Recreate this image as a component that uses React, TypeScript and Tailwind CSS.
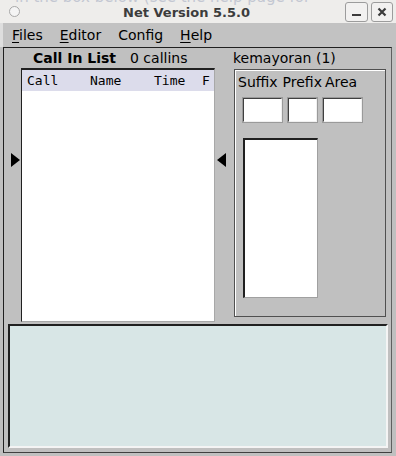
import React from "react";

const font = { fontFamily: '"DejaVu Sans", Verdana, sans-serif' };
const mono = { fontFamily: '"DejaVu Sans Mono", "Liberation Mono", monospace' };

function U({ c, rest }: { c: string; rest: string }) {
  return (
    <span>
      <span className="underline underline-offset-2 decoration-1">{c}</span>
      {rest}
    </span>
  );
}

export default function App() {
  return (
    <div className="w-[396px] h-[456px] bg-[#c0c0c0] overflow-hidden flex flex-col text-black" style={font}>
      {/* Title bar */}
      <div className="relative h-[23px] bg-[#eeedeb] flex items-center shrink-0">
        <span className="absolute left-[15px] top-[-10px] text-[15px] text-[#c3c7d2] whitespace-nowrap leading-none">
          in the box below (see the help page for
        </span>
        <div className="ml-[9px] w-[11px] h-[11px] rounded-full border border-[#a8a8a8] bg-[#f4f4f4] z-10" />
        <div className="flex-1 text-center text-[13px] font-bold text-[#3c3c3c] pl-[8px] pt-[2px] z-10">
          Net Version 5.5.0
        </div>
        <div className="flex gap-[3px] mr-[3px] z-10">
          <div className="w-[23px] h-[20px] rounded-[3px] border border-[#9c9c9c] bg-[#f2f1f0] flex items-end justify-center pb-[5px]">
            <div className="w-[9px] h-[2px] bg-[#3c3c3c]" />
          </div>
          <div className="w-[22px] h-[20px] rounded-[3px] border border-[#9c9c9c] bg-[#f2f1f0] flex items-center justify-center">
            <svg width="10" height="10" viewBox="0 0 10 10">
              <path d="M1.5 1.5 L8.5 8.5 M8.5 1.5 L1.5 8.5" stroke="#3c3c3c" strokeWidth="2.2" />
            </svg>
          </div>
        </div>
      </div>
      {/* Menu bar */}
      <div className="h-[24px] shrink-0 flex items-center text-[14px] bg-[#c2c2c2] border-l-[3px] border-[#dedede] pl-[9px] gap-[17px]">
        <U c="F" rest="iles" />
        <U c="E" rest="ditor" />
        <span>Config</span>
        <U c="H" rest="elp" />
      </div>
      {/* Body */}
      <div className="flex-1 flex flex-col ml-[3px] mr-[4px] mb-[3px] border-t border-l border-[#202020] border-r border-r-[#606060] border-b border-b-[#404040]">
        <div className="flex h-[274px] shrink-0">
          {/* left arrow col */}
          <div className="w-[17px] flex flex-col pt-[105px] pl-[7px]">
            <svg width="9" height="14" viewBox="0 0 9 14">
              <path d="M0 0 L9 7 L0 14 Z" fill="#000" />
            </svg>
          </div>
          {/* left panel */}
          <div className="w-[194px] flex flex-col">
            <div className="h-[20px] flex items-center text-[14px] whitespace-nowrap">
              <span className="font-bold ml-[12px]">Call In List</span>
              <span className="ml-[14px]">0 callins</span>
            </div>
            <div className="h-[254px] bg-white border-t-2 border-l border-[#202020] border-r border-b border-r-[#a8a8a8] border-b-[#a8a8a8]">
              <div className="h-[21px] bg-[#dcdceb] relative text-[13px] flex items-center" style={mono}>
                <span className="absolute left-[5px]">Call</span>
                <span className="absolute left-[68px]">Name</span>
                <span className="absolute left-[132px]">Time</span>
                <span className="absolute left-[180px]">F</span>
              </div>
            </div>
          </div>
          {/* right arrow col */}
          <div className="w-[19px] flex flex-col pt-[105px] pl-[2px]">
            <svg width="9" height="14" viewBox="0 0 9 14">
              <path d="M9 0 L0 7 L9 14 Z" fill="#000" />
            </svg>
          </div>
          {/* right panel */}
          <div className="w-[154px] flex flex-col">
            <div className="h-[21px] flex items-center text-[14px] whitespace-nowrap">
              <span className="-ml-[1px]">kemayoran (1)</span>
            </div>
            <div className="h-[248px] border border-[#505050] relative mr-[2px]">
              <div className="absolute inset-0 border border-white border-r-0 border-b-0" />
              <div className="relative flex flex-col pl-[3px] pt-[2px]">
                <div className="h-[20px] flex items-center text-[14px] whitespace-nowrap">
                  <span>Suffix</span>
                  <span className="ml-[5px]">Prefix</span>
                  <span className="ml-[3px]">Area</span>
                </div>
                <div className="flex mt-[6px] ml-[5px] gap-[6px]">
                  <div className="w-[39px] h-[24px] bg-white border border-[#404040] border-r-[#f0f0f0] border-b-[#f0f0f0] outline outline-1 outline-[#9a9a9a]" />
                  <div className="w-[29px] h-[24px] bg-white border border-[#404040] border-r-[#f0f0f0] border-b-[#f0f0f0] outline outline-1 outline-[#9a9a9a]" />
                  <div className="w-[39px] h-[24px] bg-white border border-[#404040] border-r-[#f0f0f0] border-b-[#f0f0f0] outline outline-1 outline-[#9a9a9a]" />
                </div>
                <div className="w-[75px] h-[160px] mt-[16px] ml-[5px] bg-white border-t-2 border-l-2 border-[#202020] border-r border-b border-r-[#a0a0a0] border-b-[#a0a0a0]" />
              </div>
            </div>
          </div>
        </div>
        {/* bottom pane */}
        <div className="ml-[4px] mr-[3px] mt-[2px] h-[124px] shrink-0 bg-[#d8e6e6] border-t-2 border-l-2 border-[#202020] border-r-2 border-b-2 border-r-[#f4f4f4] border-b-[#f4f4f4]" />
      </div>
    </div>
  );
}
